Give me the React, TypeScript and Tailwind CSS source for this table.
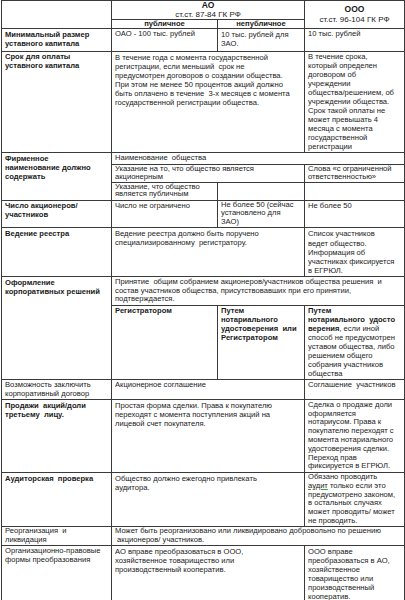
const td = "border border-[#3a3a3a] align-top px-[3px] pt-0 pb-px whitespace-pre";
const th = "border border-[#3a3a3a] align-middle text-center px-[3px] whitespace-pre";
const tight = "leading-[7.8px] pb-0";

function App() {
  return (
    <div className="w-[405px] h-[600px] bg-white overflow-hidden text-[#1a1a1a]" style={{ fontFamily: '"Liberation Sans", Arial, sans-serif' }}>
      <table className="ml-px w-[403px] table-fixed border-collapse text-[7.6px] leading-[9px]">
        <colgroup>
          <col className="w-[110px]" />
          <col className="w-[106px]" />
          <col className="w-[87px]" />
          <col className="w-[100px]" />
        </colgroup>
        <tbody>
          <tr className="h-[19px]">
            <td className={td} rowSpan={2}></td>
            <th className={`${th} font-normal`} colSpan={2}>
              <div className="font-bold text-[8.5px] leading-[9px]">АО</div>
              <div className="text-[8px] leading-[9px]">ст.ст. 87-84 ГК РФ</div>
            </th>
            <th className={`${th} font-normal`} rowSpan={2}>
              <div className="font-bold text-[8.5px] leading-[11px]">ООО</div>
              <div className="text-[8px] leading-[10px]">ст.ст. 96-104 ГК РФ</div>
            </th>
          </tr>
          <tr className="h-[9px]">
            <th className={`${th} font-bold leading-[8px]`}>публичное</th>
            <th className={`${th} font-bold leading-[8px]`}>непубличное</th>
          </tr>

          <tr className="h-[23px]">
            <td className={`${td} font-bold pt-px`}>{"Минимальный размер\nуставного капитала"}</td>
            <td className={`${td} align-middle`}>ОАО - 100 тыс. рублей</td>
            <td className={`${td} pt-px`}>{"10 тыс. рублей для\nЗАО."}</td>
            <td className={`${td} align-middle`}>10 тыс. рублей</td>
          </tr>

          <tr className="h-[100px]">
            <td className={`${td} font-bold`}>{"Срок для оплаты\nуставного капитала"}</td>
            <td className={`${td} pt-px`} colSpan={2}>
              {"В течение года с момента государственной\nрегистрации, если меньший  срок не\nпредусмотрен договоров о создании общества.\nПри этом не менее 50 процентов акций должно\nбыть оплачено в течение  3-х месяцев с момента\nгосударственной регистрации общества."}
            </td>
            <td className={`${td} leading-[9px] pt-0 pb-0`}>
              {"В течение срока,\nкоторый определен\nдоговором об\nучреждении\nобщества/решением, об\nучреждении общества.\nСрок такой оплаты не\nможет превышать 4\nмесяца с момента\nгосударственной\nрегистрации"}
            </td>
          </tr>

          <tr className="h-[12px]">
            <td className={`${td} font-bold pt-px`} rowSpan={3}>{"Фирменное\nнаименование должно\nсодержать"}</td>
            <td className={`${td} pt-px pb-0 leading-[8.5px]`} colSpan={3}>Наименование  общества</td>
          </tr>
          <tr className="h-[15px]">
            <td className={`${td} ${tight}`} colSpan={2}>{"Указание на то, что общество является\nакционерным"}</td>
            <td className={`${td} ${tight}`}>{"Слова «с ограниченной\nответственностью»"}</td>
          </tr>
          <tr className="h-[18px]">
            <td className={`${td} ${tight}`}>{"Указание, что общество\nявляется публичным"}</td>
            <td className={td}></td>
            <td className={td}></td>
          </tr>

          <tr className="h-[27px]">
            <td className={`${td} font-bold pb-0`}>{"Число акционеров/\nучастников"}</td>
            <td className={`${td} pb-0`}>Число не ограничено</td>
            <td className={`${td} pb-0 leading-[8.6px]`}>{"Не более 50 (сейчас\nустановлено для\nЗАО)"}</td>
            <td className={`${td} pb-0`}>Не более 50</td>
          </tr>

          <tr className="h-[49px]">
            <td className={`${td} font-bold pt-px`}>Ведение реестра</td>
            <td className={`${td} pt-px`} colSpan={2}>{"Ведение реестра должно быть поручено\nспециализированному  регистратору."}</td>
            <td className={`${td} pt-px leading-[9.2px]`}>{"Список участников\nведет общество.\nИнформация об\nучастниках фиксируется\nв ЕГРЮЛ."}</td>
          </tr>

          <tr className="h-[26px]">
            <td className={`${td} font-bold pt-px`} rowSpan={2}>{"Оформление\nкорпоративных решений"}</td>
            <td className={`${td} leading-[8.5px] pt-px pb-0`} colSpan={3}>
              {"Принятие  общим собранием акционеров/участников общества решения  и\nсостав участников общества, присутствовавших при его принятии,\nподтверждается."}
            </td>
          </tr>
          <tr className="h-[74px]">
            <td className={`${td} font-bold`}>Регистратором</td>
            <td className={`${td} font-bold`}>{"Путем\nнотариального\nудостоверения  или\nРегистратором"}</td>
            <td className={`${td} leading-[9px]`}>
              <b>{"Путем\nнотариального  удосто\nверения"}</b>
              {", если иной\nспособ не предусмотрен\nуставом общества, либо\nрешением общего\nсобрания участников\nобщества"}
            </td>
          </tr>

          <tr className="h-[20px]">
            <td className={`${td} pb-0`}>{"Возможность заключить\nкорпоративный договор"}</td>
            <td className={`${td} pb-0`} colSpan={2}>Акционерное соглашение</td>
            <td className={`${td} pb-0`}>Соглашение  участников</td>
          </tr>

          <tr className="h-[72px]">
            <td className={`${td} font-bold pt-px`}>{"Продажи  акций/доли\nтретьему  лицу."}</td>
            <td className={`${td} pt-px`} colSpan={2}>
              {"Простая форма сделки. Права к покупателю\nпереходят с момента поступления акций на\nлицевой счет покупателя."}
            </td>
            <td className={`${td} pt-px leading-[8.8px]`}>
              {"Сделка о продаже доли\nоформляется\nнотариусом. Права к\nпокупателю переходят с\nмомента нотариального\nудостоверения сделки.\nПереход прав\nфиксируется в ЕГРЮЛ."}
            </td>
          </tr>

          <tr className="h-[53px]">
            <td className={`${td} font-bold pt-px`}>Аудиторская  проверка</td>
            <td className={`${td} pt-px`} colSpan={2}>{"Общество должно ежегодно привлекать\nаудитора."}</td>
            <td className={`${td} pb-0 leading-[8.7px]`}>
              {"Обязано проводить\n"}
              <span className="underline decoration-[#4a9a3a]">аудит</span>
              {" только если это\nпредусмотрено законом,\nв остальных случаях\nможет проводить/ может\nне проводить."}
            </td>
          </tr>

          <tr className="h-[19px]">
            <td className={`${td} pb-0 leading-[8.5px]`}>{"Реорганизация  и\nликвидация"}</td>
            <td className={`${td} pb-0 leading-[8.5px]`} colSpan={3}>{"Может быть реорганизовано или ликвидировано добровольно по решению\n акционеров/ участников."}</td>
          </tr>

          <tr className="h-[56px]">
            <td className={td}>{"Организационно-правовые\nформы преобразования"}</td>
            <td className={`${td} pt-px`} colSpan={2}>
              {"АО вправе преобразоваться в ООО,\nхозяйственное товарищество или\nпроизводственный кооператив."}
            </td>
            <td className={`${td} pt-px leading-[9px]`}>
              {"ООО вправе\nпреобразоваться в АО,\nхозяйственное\nтоварищество или\nпроизводственный\nкооператив."}
            </td>
          </tr>
        </tbody>
      </table>
    </div>
  );
}

export default App;
